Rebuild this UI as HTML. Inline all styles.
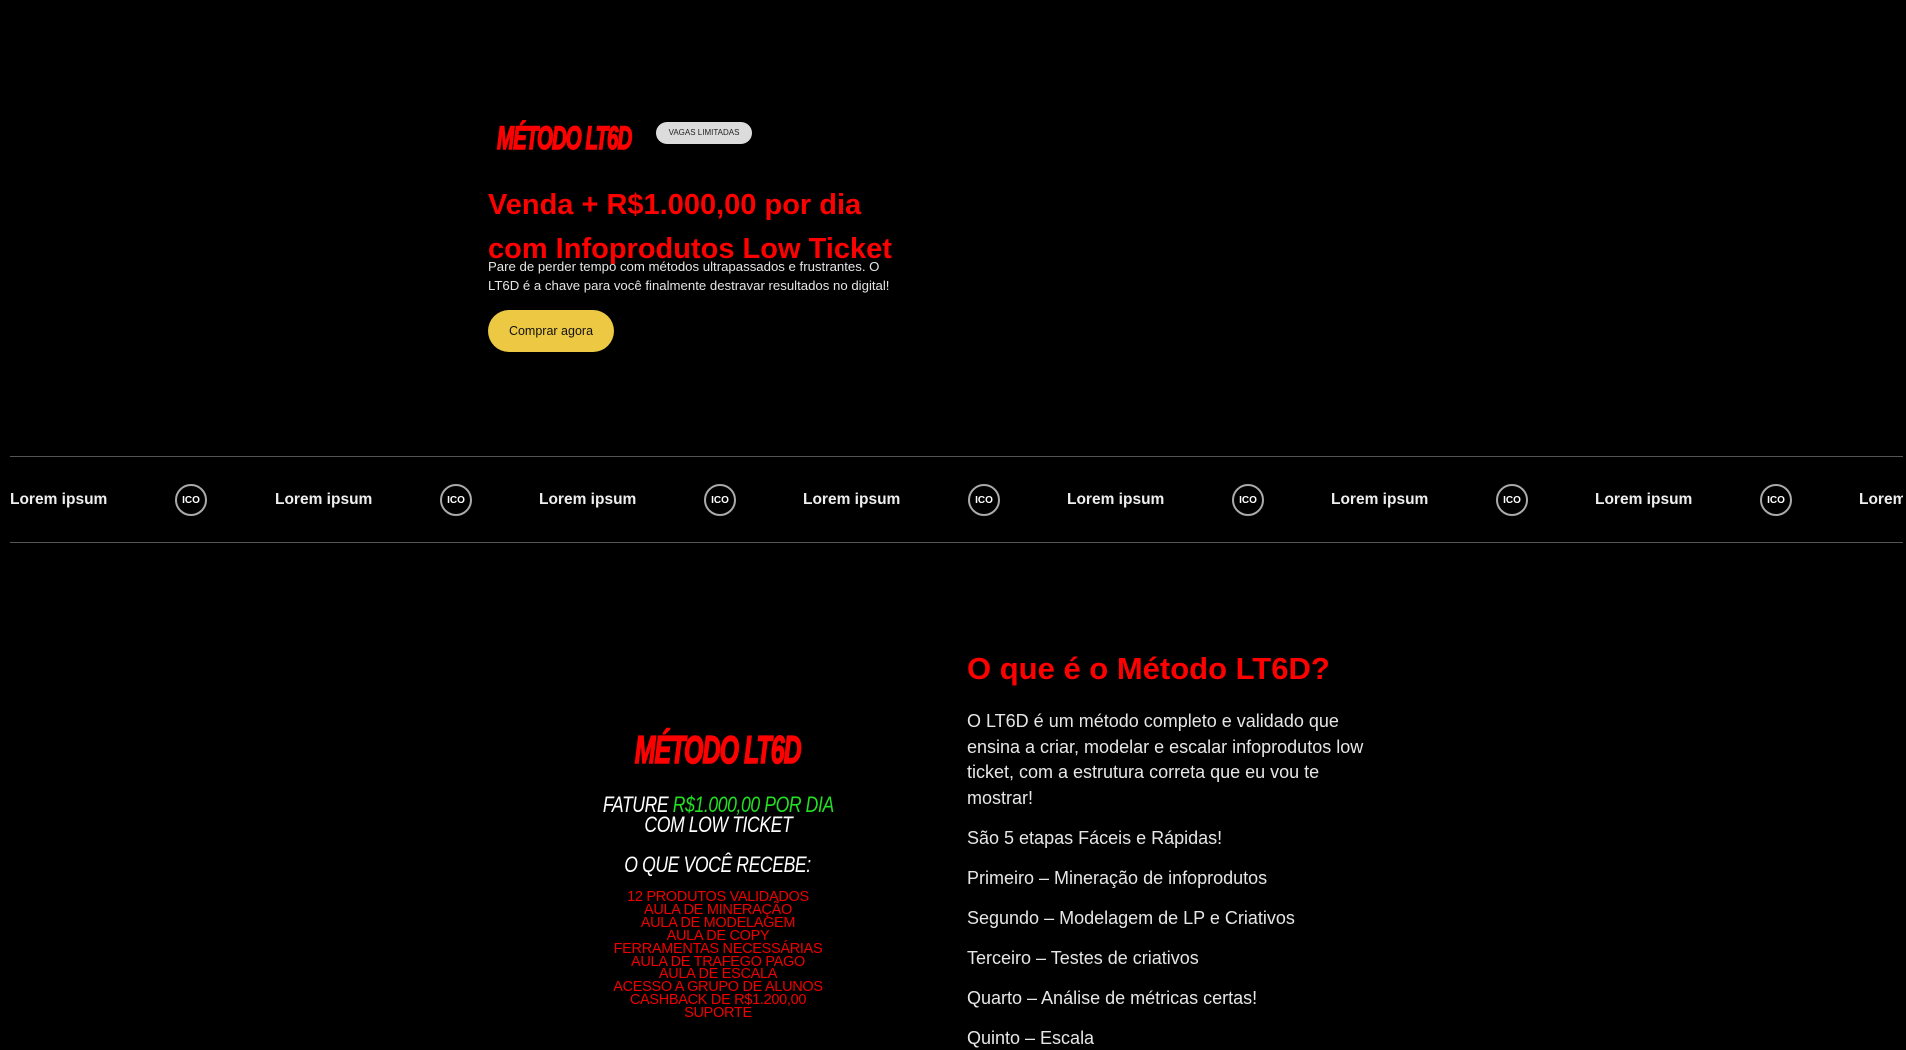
<!DOCTYPE html>
<html><head><meta charset="utf-8"><style>
*{margin:0;padding:0;box-sizing:border-box}
html,body{width:1906px;height:1046px;overflow:hidden;background:#000;font-family:"Liberation Sans",sans-serif}
.abs{position:absolute;white-space:nowrap}
.logo{color:#f00;font-weight:bold;font-style:italic;transform-origin:left top;letter-spacing:-1.5px;-webkit-text-stroke:1.5px #f00}
.h1{color:#f00;font-weight:bold;font-size:29px;line-height:44px}
.p{color:#e4e4e4;font-size:13.2px;line-height:19px}
.line{position:absolute;left:10px;width:1893px;height:1px;background:#555}
.lorem{position:absolute;top:490px;color:#eee;font-weight:bold;font-size:15.5px;line-height:20px;white-space:nowrap}
.ico{position:absolute;top:484px;width:32px;height:32px;border:2px solid #aaa;border-radius:50%;color:#fff;font-weight:bold;font-size:10px;line-height:29px;text-align:center}
.c{position:absolute;left:518px;width:400px;text-align:center;white-space:nowrap}
.r{color:#e6e6e6;font-size:18px;position:absolute;left:967px;white-space:nowrap}
.list{color:#e00;font-size:14.5px;line-height:12.9px;letter-spacing:-0.3px}
</style></head><body>
<div class="abs logo" style="left:497px;top:121px;font-size:32px;line-height:34px;transform:scaleX(0.64)">MÉTODO LT6D</div>
<div class="abs" style="left:656px;top:122px;width:96px;height:22px;border-radius:11px;background:#dcdcdc;color:#222;font-size:8px;line-height:22px;text-align:center">VAGAS LIMITADAS</div>
<div class="abs h1" style="left:488px;top:183px">Venda + R$1.000,00 por dia</div>
<div class="abs h1" style="left:488px;top:227px">com Infoprodutos Low Ticket</div>
<div class="abs p" style="left:488px;top:257px">Pare de perder tempo com métodos ultrapassados e frustrantes. O</div>
<div class="abs p" style="left:488px;top:276px">LT6D é a chave para você finalmente destravar resultados no digital!</div>
<div class="abs" style="left:488px;top:310px;width:126px;height:42px;border-radius:21px;background:#edc843;color:#111;font-size:12.5px;line-height:42px;text-align:center">Comprar agora</div>

<div class="line" style="top:456px"></div>
<div class="line" style="top:542px"></div>
<div class="lorem" style="left:10px">Lorem ipsum</div><div class="ico" style="left:175px">ICO</div>
<div class="lorem" style="left:275px">Lorem ipsum</div><div class="ico" style="left:440px">ICO</div>
<div class="lorem" style="left:539px">Lorem ipsum</div><div class="ico" style="left:704px">ICO</div>
<div class="lorem" style="left:803px">Lorem ipsum</div><div class="ico" style="left:968px">ICO</div>
<div class="lorem" style="left:1067px">Lorem ipsum</div><div class="ico" style="left:1232px">ICO</div>
<div class="lorem" style="left:1331px">Lorem ipsum</div><div class="ico" style="left:1496px">ICO</div>
<div class="lorem" style="left:1595px">Lorem ipsum</div><div class="ico" style="left:1760px">ICO</div>
<div style="position:absolute;left:1859px;top:490px;width:44px;height:22px;overflow:hidden"><div class="lorem" style="position:static">Lorem ipsum</div></div>

<div class="c" style="top:730px"><span class="logo" style="display:inline-block;font-size:39px;line-height:42px;transform:scaleX(0.64);transform-origin:center">MÉTODO LT6D</span></div>
<div class="c" style="top:795px;color:#fff;font-style:italic;font-size:22px;line-height:20px"><span style="display:inline-block;transform:scaleX(0.8);letter-spacing:-0.5px">FATURE <span style="color:#22e022">R$1.000,00 POR DIA</span><br>COM LOW TICKET</span></div>
<div class="c" style="top:854px;color:#fff;font-style:italic;font-size:22px;line-height:22px"><span style="display:inline-block;transform:scaleX(0.8);letter-spacing:-0.5px">O QUE VOCÊ RECEBE:</span></div>
<div class="c list" style="top:891px">12 PRODUTOS VALIDADOS<br>AULA DE MINERAÇÃO<br>AULA DE MODELAGEM<br>AULA DE COPY<br>FERRAMENTAS NECESSÁRIAS<br>AULA DE TRAFEGO PAGO<br>AULA DE ESCALA<br>ACESSO A GRUPO DE ALUNOS<br>CASHBACK DE R$1.200,00<br>SUPORTE</div>

<div class="abs" style="left:967px;top:650px;color:#f00;font-weight:bold;font-size:31px;line-height:38px">O que é o Método LT6D?</div>
<div class="r" style="top:709px;line-height:25.7px">O LT6D é um método completo e validado que<br>ensina a criar, modelar e escalar infoprodutos low<br>ticket, com a estrutura correta que eu vou te<br>mostrar!</div>
<div class="r" style="top:826px;line-height:24px">São 5 etapas Fáceis e Rápidas!</div>
<div class="r" style="top:866px;line-height:24px">Primeiro – Mineração de infoprodutos</div>
<div class="r" style="top:906px;line-height:24px">Segundo – Modelagem de LP e Criativos</div>
<div class="r" style="top:946px;line-height:24px">Terceiro – Testes de criativos</div>
<div class="r" style="top:986px;line-height:24px">Quarto – Análise de métricas certas!</div>
<div class="r" style="top:1026px;line-height:24px">Quinto – Escala</div>
</body></html>
